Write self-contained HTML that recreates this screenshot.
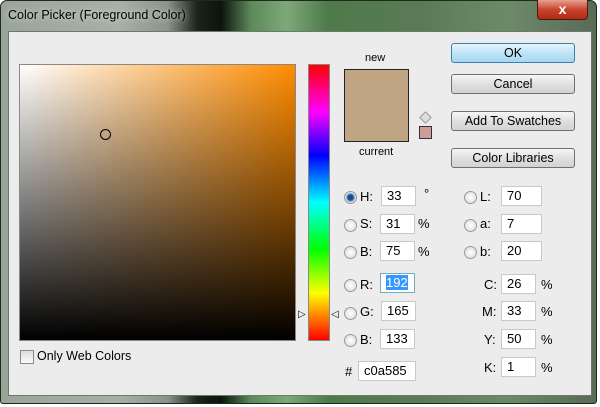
<!DOCTYPE html><html><head><style>
body{margin:0;width:600px;height:407px;background:#fff;font-family:"Liberation Sans",sans-serif;font-size:12px;color:#000;position:relative;overflow:hidden}
.a{position:absolute}
.frame{left:0;top:0;width:595px;height:402px;border-radius:7px 7px 3px 3px;background:linear-gradient(90deg,#9aa59a 0%,#a8b0a6 20%,#8a948a 28%,#1a2418 33%,#0d140c 37%,#5d8a5a 42%,#7ea877 48%,#4e7a4a 55%,#5a7a56 70%,#6c8a68 85%,#5a6a58 100%);border:1px solid #1d2a1c}
.client{left:8px;top:31px;width:582px;height:363px;background:#ececec;border:1px solid #6a7a68}
.btn{position:absolute;left:451px;width:122px;height:18px;border:1px solid #707070;border-radius:3px;background:linear-gradient(#f6f6f6,#e0e0e0 50%,#d2d2d2);text-align:center;line-height:18px;font-size:12.5px}
.inp{position:absolute;height:20px;background:#fff;border:1px solid #c8c8c8;box-sizing:border-box;line-height:18px;padding-left:5px;font-size:13px}
.r{position:absolute;width:11px;height:11px;border-radius:50%;border:1px solid #9a9a9a;background:radial-gradient(#fff,#d8d8d8)}
.l{position:absolute;font-size:13px}
</style></head><body>
<div class="a frame"></div>
<div class="a" style="left:8px;top:8px;color:#000;font-size:12.5px;text-shadow:0 0 6px #e8ece8">Color Picker (Foreground Color)</div>
<div class="a" style="left:537px;top:0px;width:49px;height:19px;border:1px solid #4a1c10;border-top:none;border-radius:0 0 4px 4px;background:linear-gradient(#e8a090,#c8452d 50%,#b02a15);color:#fff;text-align:center;font-weight:bold;font-size:14px;line-height:19px">x</div>
<div class="a client"></div>
<div class="a" style="left:19px;top:64px;width:275px;height:275px;border:1px solid #888;background:linear-gradient(transparent,#000),linear-gradient(90deg,#fff,#ff8c00)"></div>
<div class="a" style="left:100px;top:129px;width:9px;height:9px;border-radius:50%;border:1px solid #000"></div>
<div class="a" style="left:308px;top:64px;width:20px;height:275px;border:1px solid #888;background:linear-gradient(#f00,#f0f 17%,#00f 33%,#0ff 50%,#0f0 67%,#ff0 83%,#f00)"></div>
<div class="a" style="left:298px;top:309px;font-size:10px">▷</div>
<div class="a" style="left:331px;top:309px;font-size:10px">◁</div>
<div class="a" style="left:365px;top:52px;font-size:11px">new</div>
<div class="a" style="left:344px;top:69px;width:63px;height:71px;border:1px solid #222;background:#c0a585"></div>
<div class="a" style="left:359px;top:146px;font-size:11px">current</div>
<div class="a" style="left:420px;top:112px;width:9px;height:9px;background:#ddd;border:1px solid #888;transform:rotate(45deg) scale(.8)"></div>
<div class="a" style="left:419px;top:126px;width:11px;height:11px;border:1px solid #333;background:#d09c9a"></div>
<div class="btn" style="top:43px;border-color:#3c7fb1;background:linear-gradient(#e6f5fc,#bfe3f6 50%,#a6d8f2)">OK</div>
<div class="btn" style="top:74px">Cancel</div>
<div class="btn" style="top:111px">Add To Swatches</div>
<div class="btn" style="top:148px">Color Libraries</div>

<div class="r" style="left:344px;top:191px;background:radial-gradient(#1a4a8a 30%,#6aa0d8 50%,#ddd 60%)"></div><div class="l" style="left:360px;top:189px">H:</div><div class="inp" style="left:381px;top:186px;width:35px">33</div><div class="l" style="left:424px;top:186px">°</div>
<div class="r" style="left:344px;top:219px"></div><div class="l" style="left:360px;top:216px">S:</div><div class="inp" style="left:380px;top:214px;width:35px">31</div><div class="l" style="left:418px;top:216px">%</div>
<div class="r" style="left:344px;top:246px"></div><div class="l" style="left:360px;top:244px">B:</div><div class="inp" style="left:380px;top:241px;width:35px">75</div><div class="l" style="left:418px;top:244px">%</div>
<div class="r" style="left:344px;top:279px"></div><div class="l" style="left:360px;top:277px">R:</div><div class="inp" style="left:380px;top:273px;width:35px;border-color:#7ab"><span style="background:#3399ff;color:#fff">192</span></div>
<div class="r" style="left:344px;top:307px"></div><div class="l" style="left:360px;top:304px">G:</div><div class="inp" style="left:381px;top:301px;width:35px">165</div>
<div class="r" style="left:344px;top:334px"></div><div class="l" style="left:360px;top:332px">B:</div><div class="inp" style="left:380px;top:329px;width:35px">133</div>
<div class="l" style="left:345px;top:364px">#</div><div class="inp" style="left:358px;top:361px;width:58px">c0a585</div>

<div class="r" style="left:464px;top:191px"></div><div class="l" style="left:480px;top:189px">L:</div><div class="inp" style="left:501px;top:186px;width:41px">70</div>
<div class="r" style="left:464px;top:219px"></div><div class="l" style="left:480px;top:216px">a:</div><div class="inp" style="left:501px;top:214px;width:41px">7</div>
<div class="r" style="left:464px;top:246px"></div><div class="l" style="left:480px;top:244px">b:</div><div class="inp" style="left:501px;top:241px;width:41px">20</div>
<div class="l" style="left:484px;top:277px">C:</div><div class="inp" style="left:501px;top:274px;width:35px">26</div><div class="l" style="left:541px;top:277px">%</div>
<div class="l" style="left:482px;top:304px">M:</div><div class="inp" style="left:501px;top:301px;width:35px">33</div><div class="l" style="left:541px;top:304px">%</div>
<div class="l" style="left:484px;top:332px">Y:</div><div class="inp" style="left:501px;top:329px;width:35px">50</div><div class="l" style="left:541px;top:332px">%</div>
<div class="l" style="left:484px;top:360px">K:</div><div class="inp" style="left:501px;top:357px;width:35px">1</div><div class="l" style="left:541px;top:360px">%</div>

<div class="a" style="left:20px;top:350px;width:12px;height:12px;border:1px solid #8a8a8a;background:linear-gradient(#ddd,#fafafa)"></div>
<div class="l" style="left:37px;top:349px;font-size:12.5px">Only Web Colors</div>
</body></html>
